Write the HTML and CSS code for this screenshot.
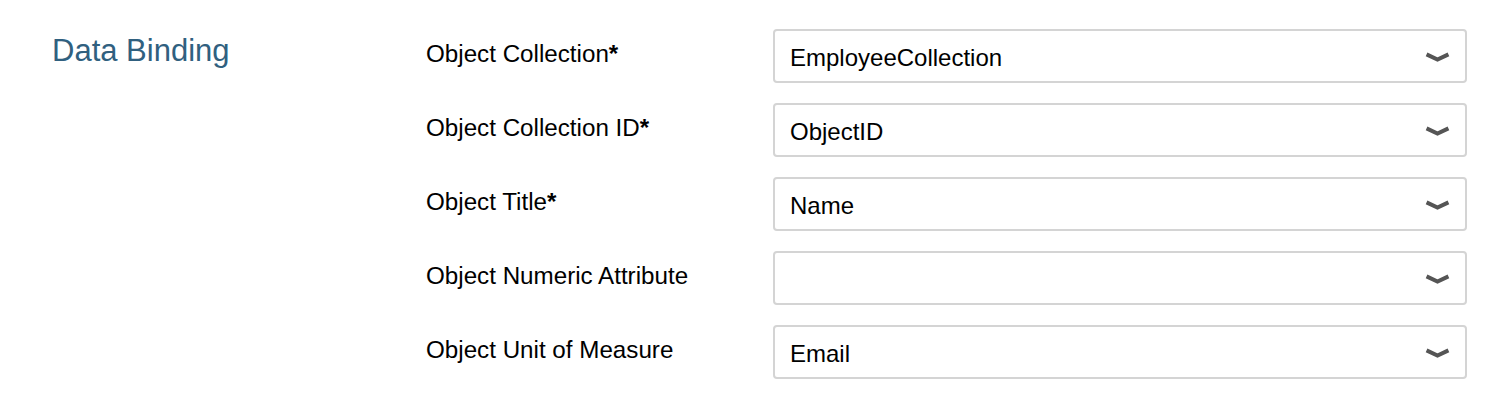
FILE: index.html
```html
<!DOCTYPE html>
<html>
<head>
<meta charset="utf-8">
<link rel="stylesheet" href="styles.css">
</head>
<body>
<section class="section">
  <h2 class="section-title">Data Binding</h2>
  <div class="fields">
    <div class="row">
      <label class="label">Object Collection<b>*</b></label>
      <div class="select"><span class="value">EmployeeCollection</span><svg class="chev" viewBox="0 0 24 10"><path d="M1.5 2 L12 7 L22.5 2" /></svg></div>
    </div>
    <div class="row">
      <label class="label">Object Collection ID<b>*</b></label>
      <div class="select"><span class="value">ObjectID</span><svg class="chev" viewBox="0 0 24 10"><path d="M1.5 2 L12 7 L22.5 2" /></svg></div>
    </div>
    <div class="row">
      <label class="label">Object Title<b>*</b></label>
      <div class="select"><span class="value">Name</span><svg class="chev" viewBox="0 0 24 10"><path d="M1.5 2 L12 7 L22.5 2" /></svg></div>
    </div>
    <div class="row">
      <label class="label">Object Numeric Attribute</label>
      <div class="select"><span class="value"></span><svg class="chev" viewBox="0 0 24 10"><path d="M1.5 2 L12 7 L22.5 2" /></svg></div>
    </div>
    <div class="row">
      <label class="label">Object Unit of Measure</label>
      <div class="select"><span class="value">Email</span><svg class="chev" viewBox="0 0 24 10"><path d="M1.5 2 L12 7 L22.5 2" /></svg></div>
    </div>
  </div>
</section>
</body>
</html>
```
FILE: styles.css
```css
html, body {
  margin: 0;
  padding: 0;
  background: #fff;
}
body {
  font-family: "Liberation Sans", Arial, Helvetica, sans-serif;
  color: #000;
}
.section {
  display: flex;
  padding: 29px 25px 0 52px;
}
.section-title {
  width: 374px;
  flex: none;
  margin: 0;
  font-size: 31px;
  font-weight: normal;
  color: #30607f;
  line-height: 1;
  padding-top: 6px;
}
.fields {
  flex: 1;
  display: flex;
  flex-direction: column;
  gap: 20px;
}
.row {
  display: flex;
  align-items: flex-start;
}
.label {
  width: 347px;
  flex: none;
  font-size: 24.2px;
  line-height: 1;
  padding-top: 13px;
}
.label b {
  font-weight: bold;
}
.select {
  flex: 1;
  height: 54px;
  box-sizing: border-box;
  border: 2px solid #d4d4d4;
  border-radius: 4px;
  display: flex;
  align-items: center;
  padding: 0 15px 0 15px;
}
.value {
  flex: 1;
  font-size: 24px;
  line-height: 1;
  padding-top: 3px;
}
.chev {
  width: 25px;
  height: 11px;
  margin-top: 2px;
}
.chev path {
  fill: none;
  stroke: #555;
  stroke-width: 3.8;
}
```
